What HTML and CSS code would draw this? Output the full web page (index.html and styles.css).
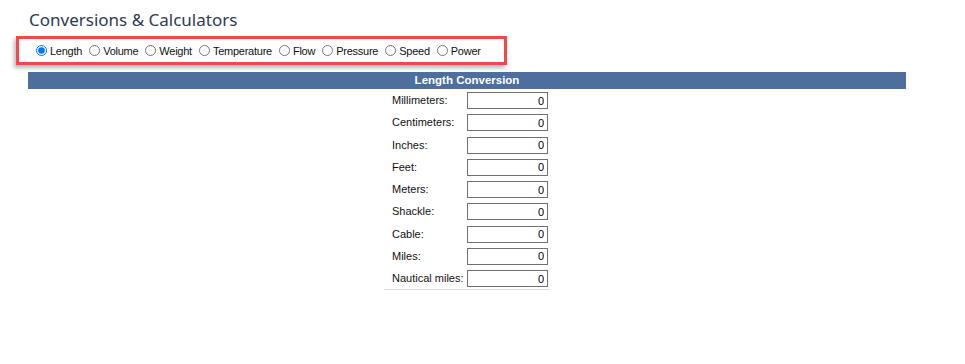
FILE: index.html
```html
<!DOCTYPE html>
<html>
<head>
<meta charset="utf-8">
<link rel="stylesheet" href="styles.css">
</head>
<body>
<div class="page">
  <h1 class="title">Conversions &amp; Calculators</h1>
  <div class="types">
    <label class="opt"><input type="radio" name="t" checked>Length</label>
    <label class="opt"><input type="radio" name="t">Volume</label>
    <label class="opt"><input type="radio" name="t">Weight</label>
    <label class="opt"><input type="radio" name="t">Temperature</label>
    <label class="opt"><input type="radio" name="t">Flow</label>
    <label class="opt"><input type="radio" name="t">Pressure</label>
    <label class="opt"><input type="radio" name="t">Speed</label>
    <label class="opt"><input type="radio" name="t">Power</label>
  </div>
  <div class="panel">
    <div class="bar">Length Conversion</div>
    <div class="form">
      <span class="lbl">Millimeters:</span><input class="val" type="text" value="0">
      <span class="lbl">Centimeters:</span><input class="val" type="text" value="0">
      <span class="lbl">Inches:</span><input class="val" type="text" value="0">
      <span class="lbl">Feet:</span><input class="val" type="text" value="0">
      <span class="lbl">Meters:</span><input class="val" type="text" value="0">
      <span class="lbl">Shackle:</span><input class="val" type="text" value="0">
      <span class="lbl">Cable:</span><input class="val" type="text" value="0">
      <span class="lbl">Miles:</span><input class="val" type="text" value="0">
      <span class="lbl">Nautical miles:</span><input class="val" type="text" value="0">
    </div>
  </div>
</div>
</body>
</html>
```
FILE: styles.css
```css
html, body {
  margin: 0;
  padding: 0;
  background: #fff;
}
.page {
  font-family: "Liberation Sans", Arial, sans-serif;
  font-size: 11px;
  color: #111;
}
.title {
  margin: 0;
  padding: 10px 0 0 29px;
  height: 26px;
  font-family: "Noto Sans", "Open Sans", sans-serif;
  font-weight: 400;
  font-size: 17px;
  line-height: 20px;
  color: #2f3a50;
}
.types {
  margin-left: 16px;
  width: 485px;
  height: 23px;
  border: 3px solid #f2474b;
  box-shadow: -2px 3px 4px rgba(0,0,0,0.28);
  display: flex;
  align-items: center;
}
.opt {
  display: flex;
  align-items: center;
  font-size: 11px;
  letter-spacing: -0.25px;
  color: #111;
}
.opt input {
  margin: 0 3px 0 17px;
  width: 11px;
  height: 11px;
}
.opt + .opt input {
  margin-left: 7px;
}
.panel {
  margin: 7px 0 0 28px;
  width: 878px;
}
.bar {
  background: #4e6e9e;
  color: #fff;
  font-weight: bold;
  font-size: 11.5px;
  height: 17px;
  line-height: 17px;
  text-align: center;
}
.form {
  width: 166px;
  margin: 0 auto;
  display: grid;
  grid-template-columns: 75px 81px;
  row-gap: 5.25px;
  padding: 3px 2px 2px 8px;
  box-sizing: border-box;
  border-bottom: 1px solid #ddd;
  align-items: center;
}
.lbl {
  font-size: 11px;
  color: #111;
  line-height: 17px;
}
.val {
  width: 81px;
  height: 17px;
  box-sizing: border-box;
  border: 1px solid #707070;
  padding: 0 3px;
  margin: 0;
  text-align: right;
  font-family: "Liberation Sans", Arial, sans-serif;
  font-size: 11px;
  color: #000;
  background: #fff;
}
```
